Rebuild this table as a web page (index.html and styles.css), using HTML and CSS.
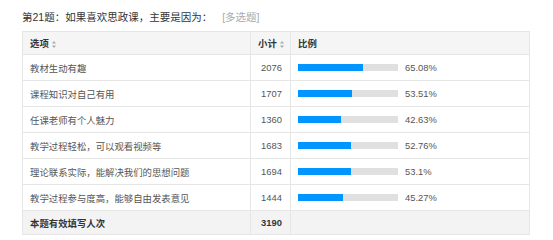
FILE: index.html
```html
<!DOCTYPE html>
<html>
<head>
<meta charset="utf-8">
<link rel="stylesheet" href="styles.css">
</head>
<body>
<div class="wrap">
  <div class="title">第21题：如果喜欢思政课，主要是因为：<span class="tag">[多选题]</span></div>
  <table class="stats">
    <colgroup><col class="c1"><col class="c2"><col class="c3"></colgroup>
    <thead>
      <tr>
        <th>选项<svg class="sort" width="4" height="7" viewBox="0 0 4 7"><path d="M2 0L4 2.6H0Z M2 7L4 4.4H0Z" fill="#aaa"/></svg></th>
        <th class="num">小计<svg class="sort" width="4" height="7" viewBox="0 0 4 7"><path d="M2 0L4 2.6H0Z M2 7L4 4.4H0Z" fill="#aaa"/></svg></th>
        <th>比例</th>
      </tr>
    </thead>
    <tbody>
      <tr><td>教材生动有趣</td><td class="num">2076</td><td><div class="pct"><div class="bar"><div class="fill" style="width:65.08%"></div></div><span>65.08%</span></div></td></tr>
      <tr><td>课程知识对自己有用</td><td class="num">1707</td><td><div class="pct"><div class="bar"><div class="fill" style="width:53.51%"></div></div><span>53.51%</span></div></td></tr>
      <tr><td>任课老师有个人魅力</td><td class="num">1360</td><td><div class="pct"><div class="bar"><div class="fill" style="width:42.63%"></div></div><span>42.63%</span></div></td></tr>
      <tr><td>教学过程轻松，可以观看视频等</td><td class="num">1683</td><td><div class="pct"><div class="bar"><div class="fill" style="width:52.76%"></div></div><span>52.76%</span></div></td></tr>
      <tr><td>理论联系实际，能解决我们的思想问题</td><td class="num">1694</td><td><div class="pct"><div class="bar"><div class="fill" style="width:53.1%"></div></div><span>53.1%</span></div></td></tr>
      <tr><td>教学过程参与度高，能够自由发表意见</td><td class="num">1444</td><td><div class="pct"><div class="bar"><div class="fill" style="width:45.27%"></div></div><span>45.27%</span></div></td></tr>
    </tbody>
    <tfoot>
      <tr><td>本题有效填写人次</td><td class="num">3190</td><td></td></tr>
    </tfoot>
  </table>
</div>
</body>
</html>
```
FILE: styles.css
```css
html, body {
  margin: 0;
  padding: 0;
  background: #fff;
}
body {
  font-family: "Liberation Sans", "Noto Sans CJK SC", sans-serif;
  font-size: 9.4px;
  color: #555;
}
.wrap {
  padding: 10px 0 0 22px;
}
.title {
  font-size: 10.5px;
  color: #333;
  line-height: 14px;
  height: 14px;
  margin-bottom: 7px;
}
.tag {
  color: #aaa;
  margin-left: 10px;
}
.stats {
  border-collapse: collapse;
  width: 507px;
  table-layout: fixed;
}
.c1 { width: 228px; }
.c2 { width: 40px; }
.c3 { width: 239px; }
.stats th, .stats td {
  border: 1px solid #e6e6e6;
  padding: 0 0 0 7px;
  text-align: left;
  vertical-align: middle;
  white-space: nowrap;
}
.stats th {
  height: 22px;
  background: #f5f5f5;
  color: #333;
  font-weight: bold;
}
.stats tbody td {
  height: 25px;
}
.stats tfoot td {
  height: 23px;
  background: #f3f3f3;
  color: #333;
  font-weight: bold;
}
.stats .num {
  padding-left: 7px;
}
.stats td.num {
  padding-left: 10px;
}
.sort {
  margin-left: 3px;
  vertical-align: -0.5px;
}
.pct {
  display: flex;
  align-items: center;
  gap: 7px;
}
.bar {
  width: 100px;
  height: 7px;
  background: #e0e0e0;
}
.fill {
  height: 100%;
  background: #0095ff;
}
```
